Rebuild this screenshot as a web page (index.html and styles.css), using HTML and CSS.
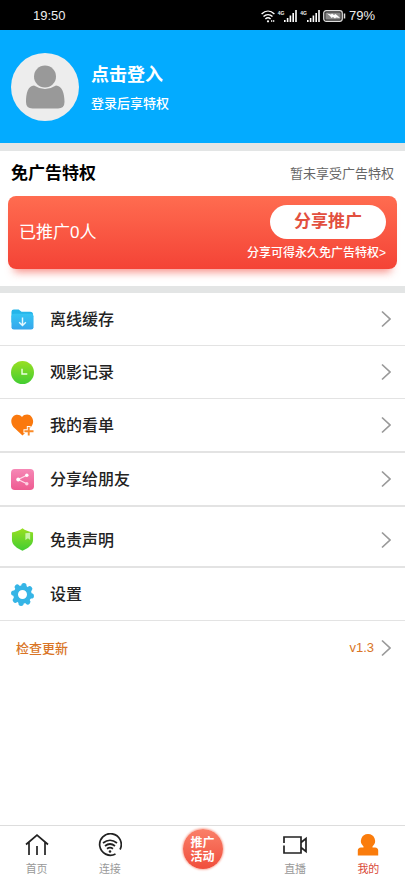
FILE: index.html
```html
<!DOCTYPE html>
<html lang="zh-CN">
<head>
<meta charset="utf-8">
<meta name="viewport" content="width=device-width, initial-scale=1">
<title>我的</title>
<link rel="stylesheet" href="styles.css">
</head>
<body>
<div class="app">
  <header class="status">
    <span>19:50</span>
    <div class="status-right">
      <svg width="14" height="13" viewBox="0 0 14 13" fill="none" stroke="#fff" stroke-width="1.4"><path d="M.6 4C4.500 .2 9.500 .2 13.400 4M2.500 6.600c2.700-2.600 6.300-2.600 9 0M4.400 9c1.600-1.500 3.600-1.500 5.200 0"/><circle cx="7" cy="11.300" r="1.100" fill="#fff" stroke="none"/><path d="M10 11h1.300M12 11h1.300"/></svg>
      <span class="signal"><small>4G</small><svg width="13" height="12" viewBox="0 0 13 12" fill="#fff"><path d="M0 10h1.600v2H0zM2.800 8h1.600v4H2.800zM5.600 5.500h1.600V12H5.600zM8.400 3H10v9H8.400zM11.200 0h1.600v12h-1.600z"/></svg></span>
      <span class="signal"><small>4G</small><svg width="13" height="12" viewBox="0 0 13 12" fill="#fff"><path d="M0 10h1.600v2H0zM2.800 8h1.600v4H2.800zM5.600 5.500h1.600V12H5.600zM8.400 3H10v9H8.400zM11.200 0h1.600v12h-1.600z"/></svg></span>
      <svg width="23" height="12" viewBox="0 0 23 12"><rect x=".7" y=".7" width="18.600" height="10.600" rx="2.500" fill="#333" stroke="#ddd" stroke-width="1.200"/><rect x="2.500" y="2.500" width="15" height="7" rx="1" fill="#888"/><path d="M4 3.500l4 1 1-1 2 1.500 1.500-1L15 6l2 2-4-.5-1 1-2-1.500L8.500 8 7 6z" fill="#fff"/><path d="M21.500 3.500v5" stroke="#ddd" stroke-width="1.500"/></svg>
      <span>79%</span>
    </div>
  </header>

  <main>
    <a class="profile" href="#login">
      <svg class="avatar" viewBox="0 0 68 68"><circle cx="34" cy="34" r="34" fill="#ededed"/><circle cx="34" cy="23.500" r="11" fill="#999"/><path d="M23 32.500Q34 39.500 45 32.500C51 33 53.500 40 53.500 49Q53.500 55.500 47 55.500H21.500Q15 55.500 15 49C15 40 17 33 23 32.500Z" fill="#999"/></svg>
      <span class="profile-text">
        <strong>点击登入</strong>
        <span>登录后享特权</span>
      </span>
    </a>

    <section class="privilege">
      <div class="privilege-head">
        <h2>免广告特权</h2>
        <span>暂未享受广告特权</span>
      </div>
      <div class="promo">
        <span class="promo-count">已推广0人</span>
        <div class="promo-side">
          <button type="button">分享推广</button>
          <a href="#share">分享可得永久免广告特权&gt;</a>
        </div>
      </div>
    </section>

    <nav class="menu">
      <a class="row" href="#cache">
        <svg class="icon" viewBox="0 0 24 24"><defs><linearGradient id="blue" x2="0" y2="1"><stop stop-color="#35c5f4"/><stop offset="1" stop-color="#36a6ec"/></linearGradient></defs><path d="M.5 4Q.5 1.500 3 1.500h5l3 2.500h9q3 0 3 3v8H.5z" fill="#25b5e9"/><rect x=".5" y="6" width="23" height="16.500" rx="2.500" fill="url(#blue)"/><path d="M12 10v8M8.500 14.800 12 18.200l3.500-3.400" fill="none" stroke="#e4f8ff" stroke-width="1.500"/></svg>
        <span>离线缓存</span>
        <svg class="chevron" viewBox="0 0 10 18"><path d="M1 1.500 9 9 1 16.500"/></svg>
      </a>
      <a class="row" href="#history">
        <svg class="icon" viewBox="0 0 24 24"><defs><linearGradient id="green" x2="0" y2="1"><stop stop-color="#99df22"/><stop offset="1" stop-color="#42cd32"/></linearGradient></defs><circle cx="12" cy="12" r="12" fill="url(#green)"/><path d="M11.500 8v5.500H17" fill="none" stroke="#eaffdf" stroke-width="1.500"/></svg>
        <span>观影记录</span>
        <svg class="chevron" viewBox="0 0 10 18"><path d="M1 1.500 9 9 1 16.500"/></svg>
      </a>
      <a class="row thick" href="#list">
        <svg class="icon" viewBox="0 0 24 24"><path d="M11.500 3C9 .2 4.500.2 2 2.800S-.2 10 2.500 13.500l9.500 9L20.500 14c3-3 3.500-7.500 1-11S14 .2 11.500 3z" fill="#fa790e"/><path d="M18.500 12.500v11M13 18h11" stroke="#fff" stroke-width="4"/><path d="M18.500 13.500v9M14 18h9.500" stroke="#fa8b28" stroke-width="2"/></svg>
        <span>我的看单</span>
        <svg class="chevron" viewBox="0 0 10 18"><path d="M1 1.500 9 9 1 16.500"/></svg>
      </a>
      <a class="row thick" href="#friends">
        <svg class="icon" viewBox="0 0 24 24"><defs><linearGradient id="pink" x2="0" y2="1"><stop stop-color="#f688b6"/><stop offset="1" stop-color="#ee5b91"/></linearGradient></defs><rect x="0" y="1" width="24" height="22" rx="4" fill="url(#pink)"/><path d="M16.500 7.500 7.500 12l9 4.500" fill="none" stroke="#ffdce9" stroke-width="1.300"/><circle cx="16.500" cy="7.500" r="1.800" fill="#fff"/><circle cx="7.500" cy="12" r="2" fill="#fff"/><circle cx="16.500" cy="16.500" r="1.800" fill="#ffd0e2"/></svg>
        <span>分享给朋友</span>
        <svg class="chevron" viewBox="0 0 10 18"><path d="M1 1.500 9 9 1 16.500"/></svg>
      </a>
      <a class="row thick tall" href="#disclaimer">
        <svg class="icon" viewBox="0 0 24 24"><path d="M12 .3q4 3.300 11 4.300v8c0 5-5.500 9-11 11.200C6.500 21.600 1 17.600 1 12.600v-8Q8 3.600 12 .3z" fill="url(#green)"/><path d="M15 5.500l5-.5v7.500l-2.300-1.700-2.700 1.700z" fill="#c9f3a7"/></svg>
        <span>免责声明</span>
        <svg class="chevron" viewBox="0 0 10 18"><path d="M1 1.500 9 9 1 16.500"/></svg>
      </a>
      <a class="row" href="#settings">
        <svg class="icon" viewBox="0 0 24 24"><g fill="none" stroke="#36b5e6"><circle cx="12" cy="12" r="7.200" stroke-width="5"/><g stroke-width="5.500" stroke-linecap="round"><path d="M13.500 3v-.2M19.300 6.300l.2-.2M21 13.500h.2M17.300 19.500l.2.200M10.500 21v.2M4.700 17.700l-.2.200M3 10.500h-.2M6.700 4.500l-.2-.2"/></g></g></svg>
        <span>设置</span>
      </a>
      <a class="row update" href="#update">
        <span>检查更新</span>
        <span class="version">v1.3</span>
        <svg class="chevron" viewBox="0 0 10 18"><path d="M1 1.500 9 9 1 16.500"/></svg>
      </a>
    </nav>
  </main>

  <nav class="tabs">
    <a href="#home"><svg viewBox="0 0 24 24"><path d="M1 11.500 12 2l11 9.500M4 9.500V22M20 9.500V22M12 13v9"/></svg><span>首页</span></a>
    <a href="#connect"><svg viewBox="0 0 24 24"><path d="M17.500 21A10.800 10.800 0 1 1 22 16.500M5 10q7-5.500 14 0M7 13q5-4 10 0M9 15.700q3-2.200 6 0"/><circle cx="12" cy="18.500" r="1.300" fill="#222" stroke="none"/></svg><span>连接</span></a>
    <a class="event" href="#event"><b>推广<br>活动</b></a>
    <a href="#live"><svg viewBox="0 0 24 24"><path d="M1 10V4h17v16H1V12.500M18 9.500l5-4v13L18 14.500"/></svg><span>直播</span></a>
    <a class="active" href="#me"><svg viewBox="0 0 24 24"><path d="M12 1a7 7 0 0 1 4.500 12.400v1H19q3.200.2 3.200 3.200v5H1.800v-5q0-3 3.200-3.200h2.500v-1A7 7 0 0 1 12 1z"/></svg><span>我的</span></a>
  </nav>
</div>
</body>
</html>
```
FILE: styles.css
```css
* { box-sizing: border-box; }
body {
  margin: 0;
  background: #fff;
  color: #222;
  font-family: "Liberation Sans", "Noto Sans CJK SC", sans-serif;
  font-size: 16px;
  line-height: 24px;
}
a { color: inherit; text-decoration: none; }
svg { display: block; flex: none; }
.app { display: flex; flex-direction: column; min-height: 100vh; }
main { flex: 1; }

.status {
  display: flex;
  align-items: center;
  justify-content: space-between;
  height: 30px;
  padding: 2px 30px 0 33px;
  background: #000;
  color: #eee;
  font-size: 13px;
}
.status-right { display: flex; align-items: center; gap: 3px; }
.signal { display: flex; align-items: flex-end; }
.signal small { align-self: flex-start; font-size: 5px; line-height: 6px; font-weight: bold; }

.profile {
  display: flex;
  align-items: center;
  gap: 12px;
  height: 113px;
  padding: 0 11px;
  background: #03abff;
  color: #fff;
}
.avatar { width: 68px; height: 68px; }
.profile-text { display: flex; flex-direction: column; gap: 5px; padding-top: 5px; font-weight: 500; font-size: 13px; }
.profile-text strong { font-size: 18px; }

.privilege {
  padding: 11px 8px 17px;
  border: solid #e3e5e5;
  border-width: 8px 0 7px;
}
.privilege-head {
  display: flex;
  justify-content: space-between;
  align-items: center;
  padding: 0 3px 10px;
  color: #666;
  font-size: 13px;
}
h2 { margin: 0; color: #000; font-size: 17px; line-height: 24px; }
.promo {
  display: flex;
  justify-content: space-between;
  align-items: center;
  height: 73px;
  padding: 0 11px;
  border-radius: 8px;
  background: linear-gradient(#ff6c50, #f44336);
  box-shadow: 0 9px 8px -6px #f4433699;
  color: #fff;
}
.promo-count { font-size: 17px; }
.promo-side { display: flex; flex-direction: column; align-items: flex-end; gap: 4px; padding-top: 2px; font-size: 12px; line-height: 20px; font-weight: 500; }
.promo button {
  width: 116px;
  height: 34px;
  padding: 0;
  border: 0;
  border-radius: 17px;
  background: #fff;
  color: #e2503f;
  font: bold 17px/34px "Liberation Sans", "Noto Sans CJK SC", sans-serif;
}

.row {
  display: flex;
  align-items: center;
  height: 53px;
  padding: 0 14px 0 11px;
  border-bottom: 1px solid #e3e3e3;
  font-weight: 500;
}
.row span { padding-top: 2px; }
.thick { height: 54px; border-bottom-width: 2px; }
.tall { height: 61px; padding-top: 6px; }
.icon { width: 23px; height: 23px; margin-right: 16px; }
.chevron { width: 10px; height: 18px; margin-left: auto; fill: none; stroke: #999; stroke-width: 1.7; }
.update { padding-left: 16px; border: 0; color: #d97526; font-size: 13px; }
.row .version { margin-left: auto; padding: 0; font-weight: normal; }
.version + .chevron { margin-left: 7px; }

.tabs {
  display: flex;
  height: 53px;
  border-top: 1px solid #ddd;
  color: #999;
  font-size: 11px;
  line-height: 16px;
}
.tabs a { display: flex; flex: 1; flex-direction: column; align-items: center; gap: 4px; padding-top: 7px; }
.tabs svg { width: 24px; height: 24px; fill: none; stroke: #222; stroke-width: 1.7; }
.tabs .event { flex: 0 0 112px; padding-top: 3px; }
.event b {
  width: 40px;
  height: 40px;
  padding-top: 7px;
  border-radius: 50%;
  background: linear-gradient(#fa8069, #f04e3c);
  box-shadow: 0 0 2px 1px #f9b6a9;
  color: #fff;
  font-size: 12px;
  line-height: 14px;
  text-align: center;
}
.tabs .active { color: #d94a38; }
.tabs .active svg { fill: #fa7c0c; stroke: none; }
```
